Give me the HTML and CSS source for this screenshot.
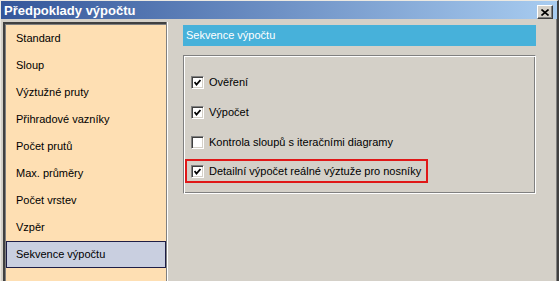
FILE: index.html
```html
<!DOCTYPE html>
<html lang="cs">
  <head>
    <meta charset="UTF-8" />
    <title>Předpoklady výpočtu</title>
    <link rel="stylesheet" href="styles.css">
  </head>
  <body>
    <div class="window">
      <div class="titlebar">
        <span class="title">Předpoklady výpočtu</span>
        <span class="close">
          <svg width="8" height="7" viewBox="0 0 8 7">
            <path d="M0.5 0.5 L7.5 6.5 M7.5 0.5 L0.5 6.5" stroke="#000" stroke-width="1.6" />
          </svg>
        </span>
      </div>

      <div class="main">
        <div class="nav">
          <div class="nav-item">Standard</div>
          <div class="nav-item">Sloup</div>
          <div class="nav-item">Výztužné pruty</div>
          <div class="nav-item">Přihradové vazníky</div>
          <div class="nav-item">Počet prutů</div>
          <div class="nav-item">Max. průměry</div>
          <div class="nav-item">Počet vrstev</div>
          <div class="nav-item">Vzpěr</div>
          <div class="nav-item selected">Sekvence výpočtu</div>
        </div>

        <div class="content">
          <div class="header">Sekvence výpočtu</div>
          <div class="group">
            <div class="row">
              <span class="box checked"><svg width="7" height="7" viewBox="0 0 7 7"><path d="M0.5 3 L2.5 5.5 L6.5 1" stroke="#000" stroke-width="1.8" fill="none" /></svg></span>
              <span class="label">Ověření</span>
            </div>
            <div class="row">
              <span class="box checked"><svg width="7" height="7" viewBox="0 0 7 7"><path d="M0.5 3 L2.5 5.5 L6.5 1" stroke="#000" stroke-width="1.8" fill="none" /></svg></span>
              <span class="label">Výpočet</span>
            </div>
            <div class="row">
              <span class="box"></span>
              <span class="label">Kontrola sloupů s iteračními diagramy</span>
            </div>
            <div class="row marked">
              <span class="box checked"><svg width="7" height="7" viewBox="0 0 7 7"><path d="M0.5 3 L2.5 5.5 L6.5 1" stroke="#000" stroke-width="1.8" fill="none" /></svg></span>
              <span class="label">Detailní výpočet reálné výztuže pro nosníky</span>
            </div>
          </div>
        </div>
      </div>
    </div>
  </body>
</html>
```

FILE: styles.css
```css
* {
  box-sizing: border-box;
}
body {
  margin: 0;
  padding: 0;
  background: #d4d0c8;
  font-family: "Liberation Sans", Arial, sans-serif;
  font-size: 11px;
  color: #000000;
  overflow: hidden;
}
.window {
  width: 559px;
  height: 281px;
  border-left: 1px solid #ece9e2;
  border-top: 1px solid #ece9e2;
  border-right: 2px solid #404040;
  box-shadow: inset -1px 0 0 #808080;
}
.titlebar {
  height: 18px;
  display: flex;
  align-items: center;
  justify-content: space-between;
  padding: 0 4px 0 3px;
  background: linear-gradient(to right, #34569a, #a8ccf0);
}
.title {
  color: #ffffff;
  font-weight: bold;
  font-size: 13px;
}
.close {
  width: 16px;
  height: 14px;
  margin-top: 4px;
  display: flex;
  align-items: center;
  justify-content: center;
  background: #d4d0c8;
  border: 1px solid;
  border-color: #ffffff #404040 #404040 #ffffff;
  box-shadow: inset -1px -1px 0 #808080;
}
.main {
  display: flex;
  padding: 3px 0 0 2px;
}
.nav {
  width: 163px;
  height: 262px;
  background: #fedfb3;
  border-top: 2px solid #404040;
  border-left: 2px solid #404040;
  box-shadow: inset 1px 1px 0 #808080, 1px 0 0 #808080, 2px 0 0 #ffffff;
  padding-top: 1px;
}
.nav-item {
  height: 27px;
  line-height: 27px;
  margin-left: 1px;
  padding-left: 10px;
}
.nav-item.selected {
  background: #c9cfe0;
  border: 1px solid #1e1e46;
  line-height: 25px;
  padding-left: 9px;
}
.content {
  margin-left: 17px;
  width: 353px;
  padding-top: 3px;
}
.header {
  height: 21px;
  line-height: 21px;
  padding-left: 3px;
  background: #47b1da;
  color: #ffffff;
  font-size: 11px;
}
.group {
  margin-top: 9px;
  height: 139px;
  border: 1px solid;
  border-color: #808080 #ffffff #ffffff #808080;
  box-shadow: inset 1px 1px 0 #ffffff, inset -1px -1px 0 #808080;
  padding: 11px 0 0 1px;
}
.row {
  height: 30px;
  display: flex;
  align-items: center;
  padding-left: 6px;
  white-space: nowrap;
}
.row.marked {
  width: fit-content;
  height: 24px;
  margin-top: 2px;
  border: 2px solid #e01818;
  padding: 0 5px 0 4px;
}
.box {
  width: 13px;
  height: 13px;
  flex: none;
  display: flex;
  align-items: center;
  justify-content: center;
  background: #ffffff;
  border: 1px solid;
  border-color: #808080 #ffffff #ffffff #808080;
  box-shadow: inset 1px 1px 0 #404040, inset -1px -1px 0 #d4d0c8;
}
.label {
  margin-left: 5px;
}
```
